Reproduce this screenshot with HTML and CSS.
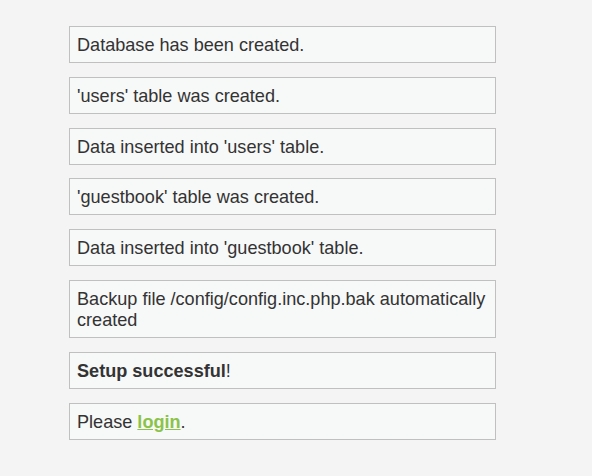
FILE: index.html
```html
<!DOCTYPE html>
<html>
<head>
<meta charset="utf-8">
<link rel="stylesheet" href="styles.css">
</head>
<body>
<div class="content">
  <div class="message">Database has been created.</div>
  <div class="message">'users' table was created.</div>
  <div class="message">Data inserted into 'users' table.</div>
  <div class="message">'guestbook' table was created.</div>
  <div class="message">Data inserted into 'guestbook' table.</div>
  <div class="message">Backup file /config/config.inc.php.bak automatically created</div>
  <div class="message"><strong>Setup successful</strong>!</div>
  <div class="message">Please <a href="#">login</a>.</div>
</div>
</body>
</html>
```
FILE: styles.css
```css
html, body {
  margin: 0;
  padding: 0;
  background: #f4f4f4;
}
body {
  font-family: "Liberation Sans", Arial, sans-serif;
  font-size: 18.1px;
  color: #333333;
}
.content {
  padding: 12px 0 0 69px;
  width: 426.5px;
}
.message {
  background: #f7f8f8;
  border: 1px solid #c0c0c0;
  padding: 8px 7px 6px;
  margin: 13.86px 0;
  line-height: 21px;
}
.message strong {
  font-weight: bold;
}
.message a {
  color: #8bc34a;
  font-weight: bold;
  text-decoration: underline;
}
```
